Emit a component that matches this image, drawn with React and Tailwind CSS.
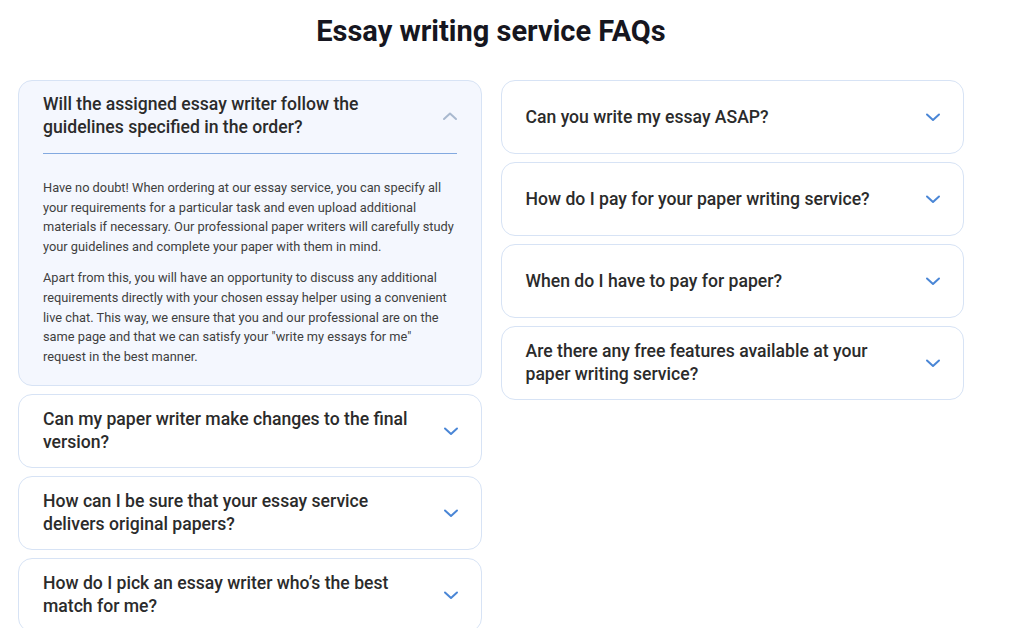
import React from "react";

function Chevron({ up }) {
  return (
    <svg width="16" height="10" viewBox="0 0 16 10" fill="none" className="shrink-0">
      {up ? (
        <path d="M2 8 L8 2.5 L14 8" stroke="#a9b9cf" strokeWidth="2" strokeLinecap="round" strokeLinejoin="round" />
      ) : (
        <path d="M2 2.5 L8 8 L14 2.5" stroke="#4a86d6" strokeWidth="2" strokeLinecap="round" strokeLinejoin="round" />
      )}
    </svg>
  );
}

function Item({ q }) {
  return (
    <div className="h-[74px] rounded-[14px] border border-[#d7e3f5] bg-white flex items-center justify-between pl-[24px] pr-[22px]">
      <div className="w-[380px] text-[17.6px] leading-[23px] font-medium text-[#2b2b2b]">{q}</div>
      <Chevron />
    </div>
  );
}

export default function App() {
  const left = [
    "Can my paper writer make changes to the final version?",
    "How can I be sure that your essay service delivers original papers?",
    "How do I pick an essay writer who’s the best match for me?",
  ];
  const right = [
    "Can you write my essay ASAP?",
    "How do I pay for your paper writing service?",
    "When do I have to pay for paper?",
    "Are there any free features available at your paper writing service?",
  ];
  return (
    <div className="w-[1024px] h-[628px] overflow-hidden bg-white" style={{ fontFamily: "Roboto, 'Liberation Sans', sans-serif" }}>
      <div className="w-[946px] ml-[18px]">
        <h2 className="text-center text-[29px] leading-[34px] font-bold text-[#161620] pt-[14px]">Essay writing service FAQs</h2>
        <div className="mt-[32px] flex gap-[19px] items-start">
          <div className="w-[464px] flex flex-col gap-[8px]">
            <div className="rounded-[14px] border border-[#d7e3f5] bg-[#f4f7fe] pl-[24px] pr-[24px] pt-[12px] pb-[19px]">
              <div className="flex items-center justify-between pb-[14px] border-b border-[#82a9e0]">
                <div className="w-[380px] text-[17.6px] leading-[23px] font-medium text-[#2b2b2b]">
                  Will the assigned essay writer follow the guidelines specified in the order?
                </div>
                <span className="mr-[-1px]"><Chevron up /></span>
              </div>
              <div className="pt-[24px] text-[12.8px] leading-[19.6px] text-[#3f3f3f]">
                <p>
                  Have no doubt! When ordering at our essay service, you can specify all your requirements for a particular task and even upload additional materials if necessary. Our professional paper writers will carefully study your guidelines and complete your paper with them in mind.
                </p>
                <p className="mt-[12px]">
                  Apart from this, you will have an opportunity to discuss any additional requirements directly with your chosen essay helper using a convenient live chat. This way, we ensure that you and our professional are on the same page and that we can satisfy your "write my essays for me" request in the best manner.
                </p>
              </div>
            </div>
            {left.map((q) => (
              <Item key={q} q={q} />
            ))}
          </div>
          <div className="w-[464px] flex flex-col gap-[8px]">
            {right.map((q) => (
              <Item key={q} q={q} />
            ))}
          </div>
        </div>
      </div>
    </div>
  );
}
